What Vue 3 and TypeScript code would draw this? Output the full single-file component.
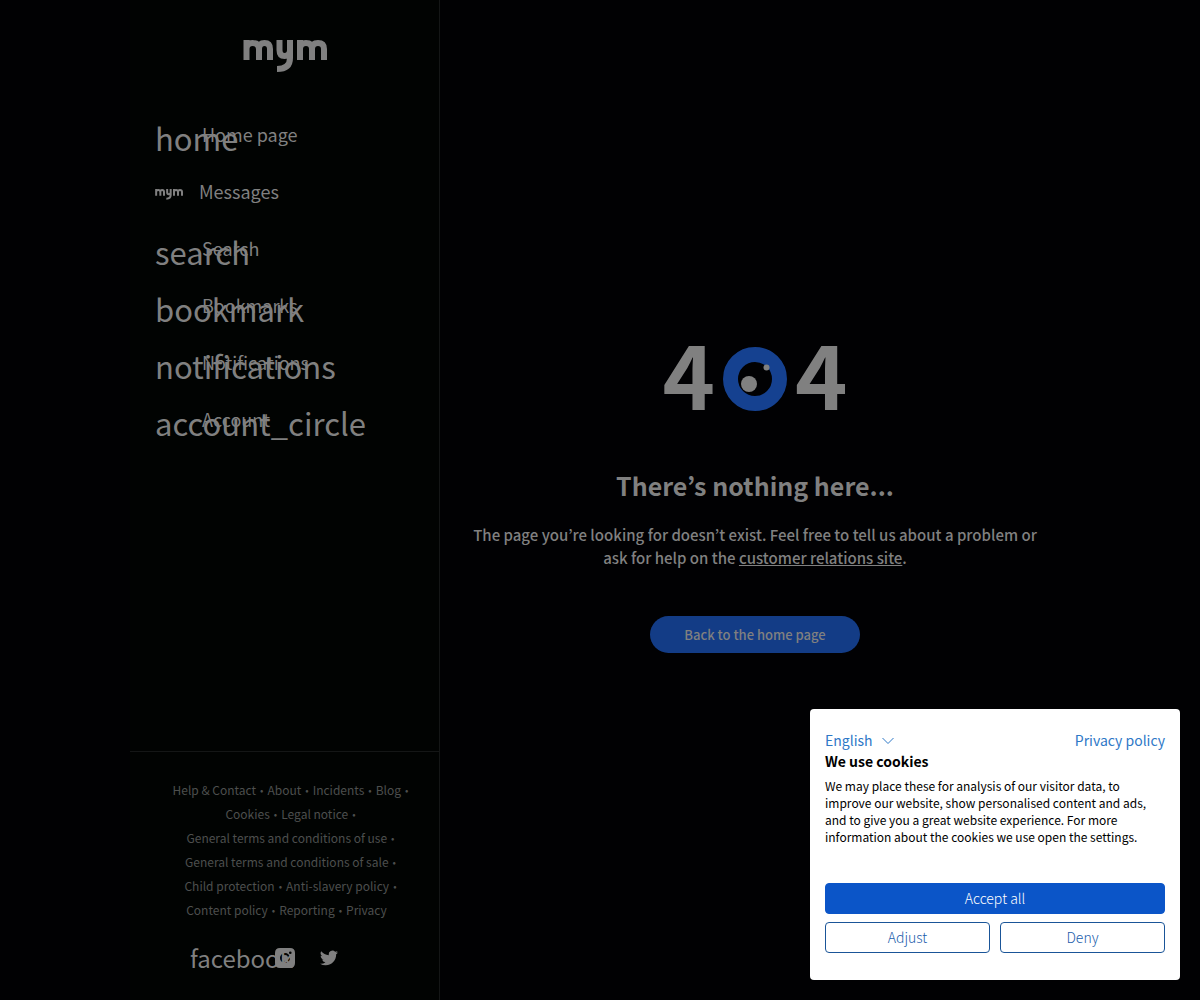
<script setup lang="ts">
import { ref } from 'vue'

interface NavItem {
  icon: string
  label: string
}

const navItems: NavItem[] = [
  { icon: 'home', label: 'Home page' },
  { icon: '', label: 'Messages' },
  { icon: 'search', label: 'Search' },
  { icon: 'bookmark', label: 'Bookmarks' },
  { icon: 'notifications', label: 'Notifications' },
  { icon: 'account_circle', label: 'Account' },
]

const footerLinks: string[] = [
  'Help & Contact',
  'About',
  'Incidents',
  'Blog',
  'Cookies',
  'Legal notice',
  'General terms and conditions of use',
  'General terms and conditions of sale',
  'Child protection',
  'Anti-slavery policy',
  'Content policy',
  'Reporting',
  'Privacy',
]

const language = ref('English')
</script>

<template>
  <div class="page">
    <aside class="sidebar">
      <a class="logo" href="#" aria-label="mym">
        <svg viewBox="0 0 84 34" width="84" height="34">
          <g fill="none" stroke="currentColor" stroke-width="6">
            <path d="M3.500 22V2M3.500 22V11Q3.500 5 9.500 5Q16 5 16 11V22M16 11Q16 5 21.500 5Q27 5 27 11V22" />
            <path d="M36.500 2V12Q36.500 18 41.500 18Q47 18 47 12V2M47 10V20Q47 31 34 31" />
            <path d="M57 22V2M57 22V11Q57 5 63 5Q69 5 69 11V22M69 11Q69 5 75 5Q81 5 81 11V22" />
          </g>
        </svg>
      </a>

      <nav class="nav" aria-label="Main">
        <a v-for="item in navItems" :key="item.label" href="#" class="nav-item">
          <span v-if="item.icon" class="nav-icon" aria-hidden="true">{{ item.icon }}</span>
          <svg v-else class="nav-mym" viewBox="0 0 84 34" width="28" height="12" aria-hidden="true">
            <g fill="none" stroke="currentColor" stroke-width="6">
              <path d="M3.500 22V2M3.500 22V11Q3.500 5 9.500 5Q16 5 16 11V22M16 11Q16 5 21.500 5Q27 5 27 11V22" />
              <path d="M36.500 2V12Q36.500 18 41.500 18Q47 18 47 12V2M47 10V20Q47 31 34 31" />
              <path d="M57 22V2M57 22V11Q57 5 63 5Q69 5 69 11V22M69 11Q69 5 75 5Q81 5 81 11V22" />
            </g>
          </svg>
          <span class="nav-label">{{ item.label }}</span>
        </a>
      </nav>

      <footer class="footer">
        <ul class="footer-links">
          <li v-for="(link, i) in footerLinks" :key="link">
            <a href="#">{{ link }}</a>
            <span v-if="i < footerLinks.length - 1" class="dot">•</span>
          </li>
        </ul>
        <div class="social">
          <a href="#" class="facebook">facebook</a>
          <a href="#" class="instagram" aria-label="Instagram">
            <svg viewBox="0 0 20 20" width="20" height="20">
              <path
                fill="currentColor"
                fill-rule="evenodd"
                d="M5 0H15Q20 0 20 5V15Q20 20 15 20H5Q0 20 0 15V5Q0 0 5 0ZM10 5A5 5 0 1 0 10 15A5 5 0 1 0 10 5ZM15.300 3.400A1.300 1.300 0 1 0 15.300 6A1.300 1.300 0 1 0 15.300 3.400Z"
              />
              <circle cx="10" cy="10" r="3" fill="currentColor" />
            </svg>
          </a>
          <a href="#" class="twitter" aria-label="Twitter">
            <svg viewBox="0 0 24 24" width="18" height="18">
              <path
                fill="currentColor"
                d="M23.950 4.570a10 10 0 0 1-2.820.770 4.960 4.960 0 0 0 2.160-2.720c-.950.550-2 .950-3.120 1.180a4.920 4.920 0 0 0-8.390 4.480C7.690 8.100 4.070 6.130 1.640 3.160a4.900 4.900 0 0 0 1.520 6.570 4.900 4.900 0 0 1-2.230-.610v.060c0 2.380 1.700 4.370 3.950 4.820a5 5 0 0 1-2.210.080 4.940 4.940 0 0 0 4.600 3.420A9.870 9.870 0 0 1 0 19.540a13.990 13.990 0 0 0 7.550 2.210c9.050 0 14-7.500 14-13.980 0-.210 0-.420-.020-.630a9.940 9.940 0 0 0 2.460-2.550z"
              />
            </svg>
          </a>
        </div>
      </footer>
    </aside>

    <main class="content">
      <div class="code" role="img" aria-label="404">
        <span>4</span>
        <svg viewBox="0 0 64 64" width="64" height="64">
          <circle cx="32" cy="32" r="24.500" fill="none" stroke="#154190" stroke-width="15" />
          <circle cx="26" cy="37" r="8" fill="#808080" />
          <circle cx="43.500" cy="20.500" r="3" fill="#808080" />
        </svg>
        <span>4</span>
      </div>
      <h1>There’s nothing here...</h1>
      <p>
        The page you’re looking for doesn’t exist. Feel free to tell us about a problem or ask for help on the
        <a href="#">customer relations site</a>.
      </p>
      <button type="button" class="back">Back to the home page</button>
    </main>

    <section class="cookies" role="dialog" aria-labelledby="cookies-title">
      <div class="cookies-top">
        <div class="language">
          <select v-model="language" aria-label="Language">
            <option>English</option>
          </select>
          <svg viewBox="0 0 12 8" width="12" height="8" aria-hidden="true">
            <path d="M.500 1L6 6.500L11.500 1" fill="none" stroke="currentColor" />
          </svg>
        </div>
        <a href="#">Privacy policy</a>
      </div>
      <h2 id="cookies-title">We use cookies</h2>
      <p>
        We may place these for analysis of our visitor data, to improve our website, show personalised content and
        ads, and to give you a great website experience. For more information about the cookies we use open the
        settings.
      </p>
      <div class="cookies-actions">
        <button type="button" class="accept">Accept all</button>
        <button type="button">Adjust</button>
        <button type="button">Deny</button>
      </div>
    </section>
  </div>
</template>

<style>
body {
  margin: 0;
  background: #010103;
}
</style>

<style scoped>
.page,
.page button,
.page select {
  font-family: 'Noto Sans CJK KR', 'Noto Sans', sans-serif;
}

.page {
  box-sizing: border-box;
  display: flex;
  max-width: 940px;
  min-height: 100vh;
  margin: 0 auto;
  color: #808080;
}

.page a {
  color: inherit;
}

.sidebar {
  box-sizing: border-box;
  display: flex;
  flex-direction: column;
  flex: 0 0 310px;
  border-right: 1px solid #141616;
  background: #010302;
}

.logo {
  display: flex;
  justify-content: center;
  padding: 38px 0 35px;
}

.nav {
  display: flex;
  flex-direction: column;
}

.nav-item {
  display: flex;
  align-items: center;
  height: 57px;
  padding-left: 25px;
  font-size: 18px;
  line-height: 26px;
  text-decoration: none;
}

.nav-icon {
  flex: 0 0 32px;
  width: 32px;
  margin-right: 15px;
  padding-top: 5px;
  font-size: 31px;
  line-height: 32px;
  white-space: nowrap;
}

.nav-label {
  padding-bottom: 4px;
}

.nav-mym {
  margin-top: 2px;
  margin-right: 16px;
}

.footer {
  margin-top: auto;
  padding: 26px 24px 30px 36px;
  border-top: 1px solid #141616;
}

.footer-links {
  display: flex;
  flex-wrap: wrap;
  justify-content: center;
  column-gap: 4px;
  margin: 0;
  padding: 0;
  color: #4d4f4e;
  font-size: 12px;
  line-height: 24px;
  list-style: none;
}

.footer-links li {
  display: flex;
  gap: 4px;
  white-space: nowrap;
}

.footer-links li:last-child {
  padding-right: 8px;
}

.footer-links .dot {
  font-size: 10px;
}

.footer-links a {
  text-decoration: none;
}

.social {
  display: flex;
  align-items: center;
  height: 24px;
  margin-top: 24px;
  padding-left: 24px;
}

.facebook {
  overflow: hidden;
  width: 104px;
  font-size: 24px;
  line-height: 34px;
  text-decoration: none;
}

.social svg {
  display: block;
}

.instagram {
  margin-left: -19px;
}

.twitter {
  margin-left: 25px;
}

.content {
  display: flex;
  flex: 1;
  flex-direction: column;
  align-items: center;
  justify-content: center;
  padding: 0 30px;
  text-align: center;
}

.code {
  display: flex;
  align-items: flex-start;
  gap: 8px;
  font-size: 89px;
  font-weight: 700;
  line-height: 50px;
}

h1 {
  margin: 55px 0 0;
  font-size: 25px;
  font-weight: 700;
  line-height: 38px;
}

.content p {
  margin: 19px 0 0;
  font-size: 15px;
  font-weight: 500;
  line-height: 23px;
}

.back {
  width: 210px;
  height: 37px;
  margin-top: 47px;
  padding: 0;
  border: 0;
  border-radius: 19px;
  background: #133c86;
  color: #808080;
  font-size: 13px;
  font-weight: 500;
}

.cookies {
  position: fixed;
  right: 20px;
  bottom: 20px;
  box-sizing: border-box;
  width: 370px;
  padding: 21px 15px 27px;
  border-radius: 4px;
  background: #fff;
  color: #000;
}

.cookies-top {
  display: flex;
  justify-content: space-between;
  color: #2e78c7;
  font-size: 14px;
  line-height: 21px;
}

.cookies-top a {
  text-decoration: none;
}

.language {
  display: flex;
  align-items: center;
}

.language select {
  height: 21px;
  padding: 0 21px 0 0;
  border: 0;
  appearance: none;
  background: none;
  color: inherit;
  font-size: 14px;
  line-height: 21px;
}

.language svg {
  margin-left: -12px;
  pointer-events: none;
}

h2 {
  margin: 0;
  font-size: 14px;
  font-weight: 700;
  line-height: 21px;
}

.cookies p {
  margin: 5px 0 0;
  font-size: 12px;
  line-height: 17px;
}

.cookies-actions {
  display: grid;
  grid-template-columns: 1fr 1fr;
  gap: 8px 10px;
  margin-top: 38px;
}

.cookies-actions button {
  height: 31px;
  padding: 0 0 2px;
  border: 1px solid #1a5598;
  border-radius: 4px;
  background: #fff;
  color: #1a5cab;
  font-size: 14px;
  font-weight: 300;
}

.cookies-actions .accept {
  grid-column: 1 / -1;
  border-color: #0b55c8;
  background: #0b55c8;
  color: #fff;
}
</style>
